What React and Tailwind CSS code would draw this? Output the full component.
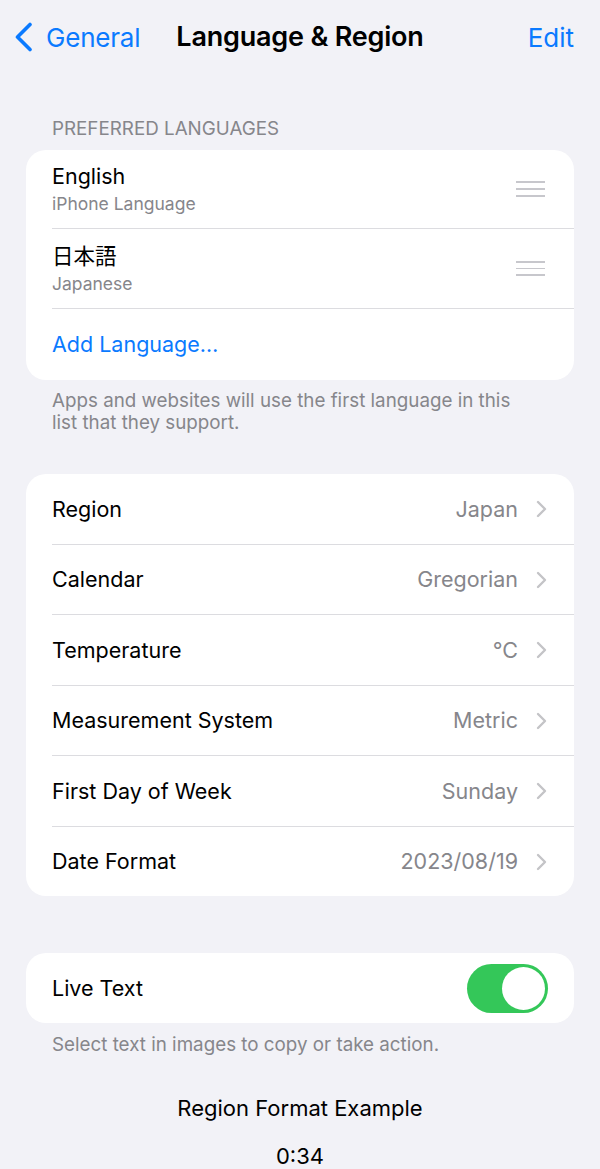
import React from "react";

const Chevron = () => (
  <svg width="11" height="18" viewBox="0 0 11 18" fill="none">
    <path d="M2 2l7 7-7 7" stroke="#c4c4c7" strokeWidth="2.4" strokeLinecap="round" strokeLinejoin="round" />
  </svg>
);

const Handle = () => (
  <div className="flex flex-col gap-[5px] w-[29px]">
    <div className="h-[1.7px] bg-[#c7c7cc]" />
    <div className="h-[1.7px] bg-[#c7c7cc]" />
    <div className="h-[1.7px] bg-[#c7c7cc]" />
  </div>
);

const rows = [
  ["Region", "Japan", "h-[71px]"],
  ["Calendar", "Gregorian", "h-[70px]"],
  ["Temperature", "°C", "h-[71px]"],
  ["Measurement System", "Metric", "h-[70px]"],
  ["First Day of Week", "Sunday", "h-[71px]"],
  ["Date Format", "2023/08/19", "h-[69px]"],
];

export default function App() {
  return (
    <div
      className="w-[600px] min-h-[1169px] bg-[#f2f2f7] text-black overflow-hidden"
      style={{ fontFamily: "Inter, 'Noto Sans CJK JP', sans-serif" }}
    >
      {/* Nav */}
      <div className="h-[74px] grid grid-cols-[1fr_auto_1fr] items-center">
        <div className="flex items-center pl-[14px] text-[#0a7aff] text-[26px] tracking-[-0.2px]">
          <svg width="20" height="30" viewBox="0 0 20 30" fill="none" className="mr-[12px]">
            <path d="M16 2.5L3.5 15 16 27.5" stroke="#0a7aff" strokeWidth="3.6" strokeLinecap="round" strokeLinejoin="round" />
          </svg>
          <span>General</span>
        </div>
        <div className="text-[27px] font-semibold tracking-[-0.2px]">Language &amp; Region</div>
        <div className="text-right pr-[26px] text-[#0a7aff] text-[26px]">Edit</div>
      </div>

      {/* Preferred languages */}
      <div className="mt-[43px] px-[52px] text-[18.8px] leading-[24px] text-[#86868b] uppercase">
        Preferred Languages
      </div>
      <div className="mx-[26px] mt-[9px] bg-white rounded-[20px] overflow-hidden">
        <div className="pl-[26px]">
          <div className="h-[79px] flex items-center justify-between pr-[29px] border-b border-[#dcdce0]">
            <div className="flex flex-col -mt-[1px]">
              <span className="text-[21.5px] leading-[28px]">English</span>
              <span className="text-[17.5px] leading-[22px] text-[#86868b] mt-[3px]">iPhone Language</span>
            </div>
            <Handle />
          </div>
          <div className="h-[80px] flex items-center justify-between pr-[29px] border-b border-[#dcdce0]">
            <div className="flex flex-col -mt-[1px]">
              <span className="text-[21.5px] leading-[28px]">日本語</span>
              <span className="text-[17.5px] leading-[22px] text-[#86868b] mt-[3px]">Japanese</span>
            </div>
            <Handle />
          </div>
          <div className="h-[71px] flex items-center text-[21.5px] text-[#0a7aff]">Add Language…</div>
        </div>
      </div>
      <div className="mt-[10px] pl-[52px] pr-[70px] text-[18.8px] leading-[22px] text-[#86868b]">
        Apps and websites will use the first language in this list that they support.
      </div>

      {/* Region settings */}
      <div className="mx-[26px] mt-[40px] bg-white rounded-[20px] overflow-hidden">
        {rows.map(([label, value, h], i) => (
          <div key={label} className="pl-[26px]">
            <div
              className={
                "flex items-center justify-between pr-[27px] " +
                h +
                (i < rows.length - 1 ? " border-b border-[#dcdce0]" : "")
              }
            >
              <span className="text-[21.5px]">{label}</span>
              <div className="flex items-center gap-[18px]">
                <span className="text-[21.5px] text-[#86868b]">{value}</span>
                <Chevron />
              </div>
            </div>
          </div>
        ))}
      </div>

      {/* Live text */}
      <div className="mx-[26px] mt-[57px] bg-white rounded-[20px] h-[70px] flex items-center justify-between pl-[26px] pr-[26px]">
        <span className="text-[21.5px]">Live Text</span>
        <div className="w-[81px] h-[49px] rounded-full bg-[#34c759] flex items-center justify-end p-[3px]">
          <div className="w-[43px] h-[43px] rounded-full bg-white" />
        </div>
      </div>
      <div className="mt-[11px] px-[52px] text-[18.8px] leading-[22px] text-[#86868b]">
        Select text in images to copy or take action.
      </div>

      <div className="mt-[38px] text-center text-[22px] leading-[28px]">Region Format Example</div>
      <div className="mt-[20px] text-center text-[22px] leading-[28px]">0:34</div>
    </div>
  );
}
